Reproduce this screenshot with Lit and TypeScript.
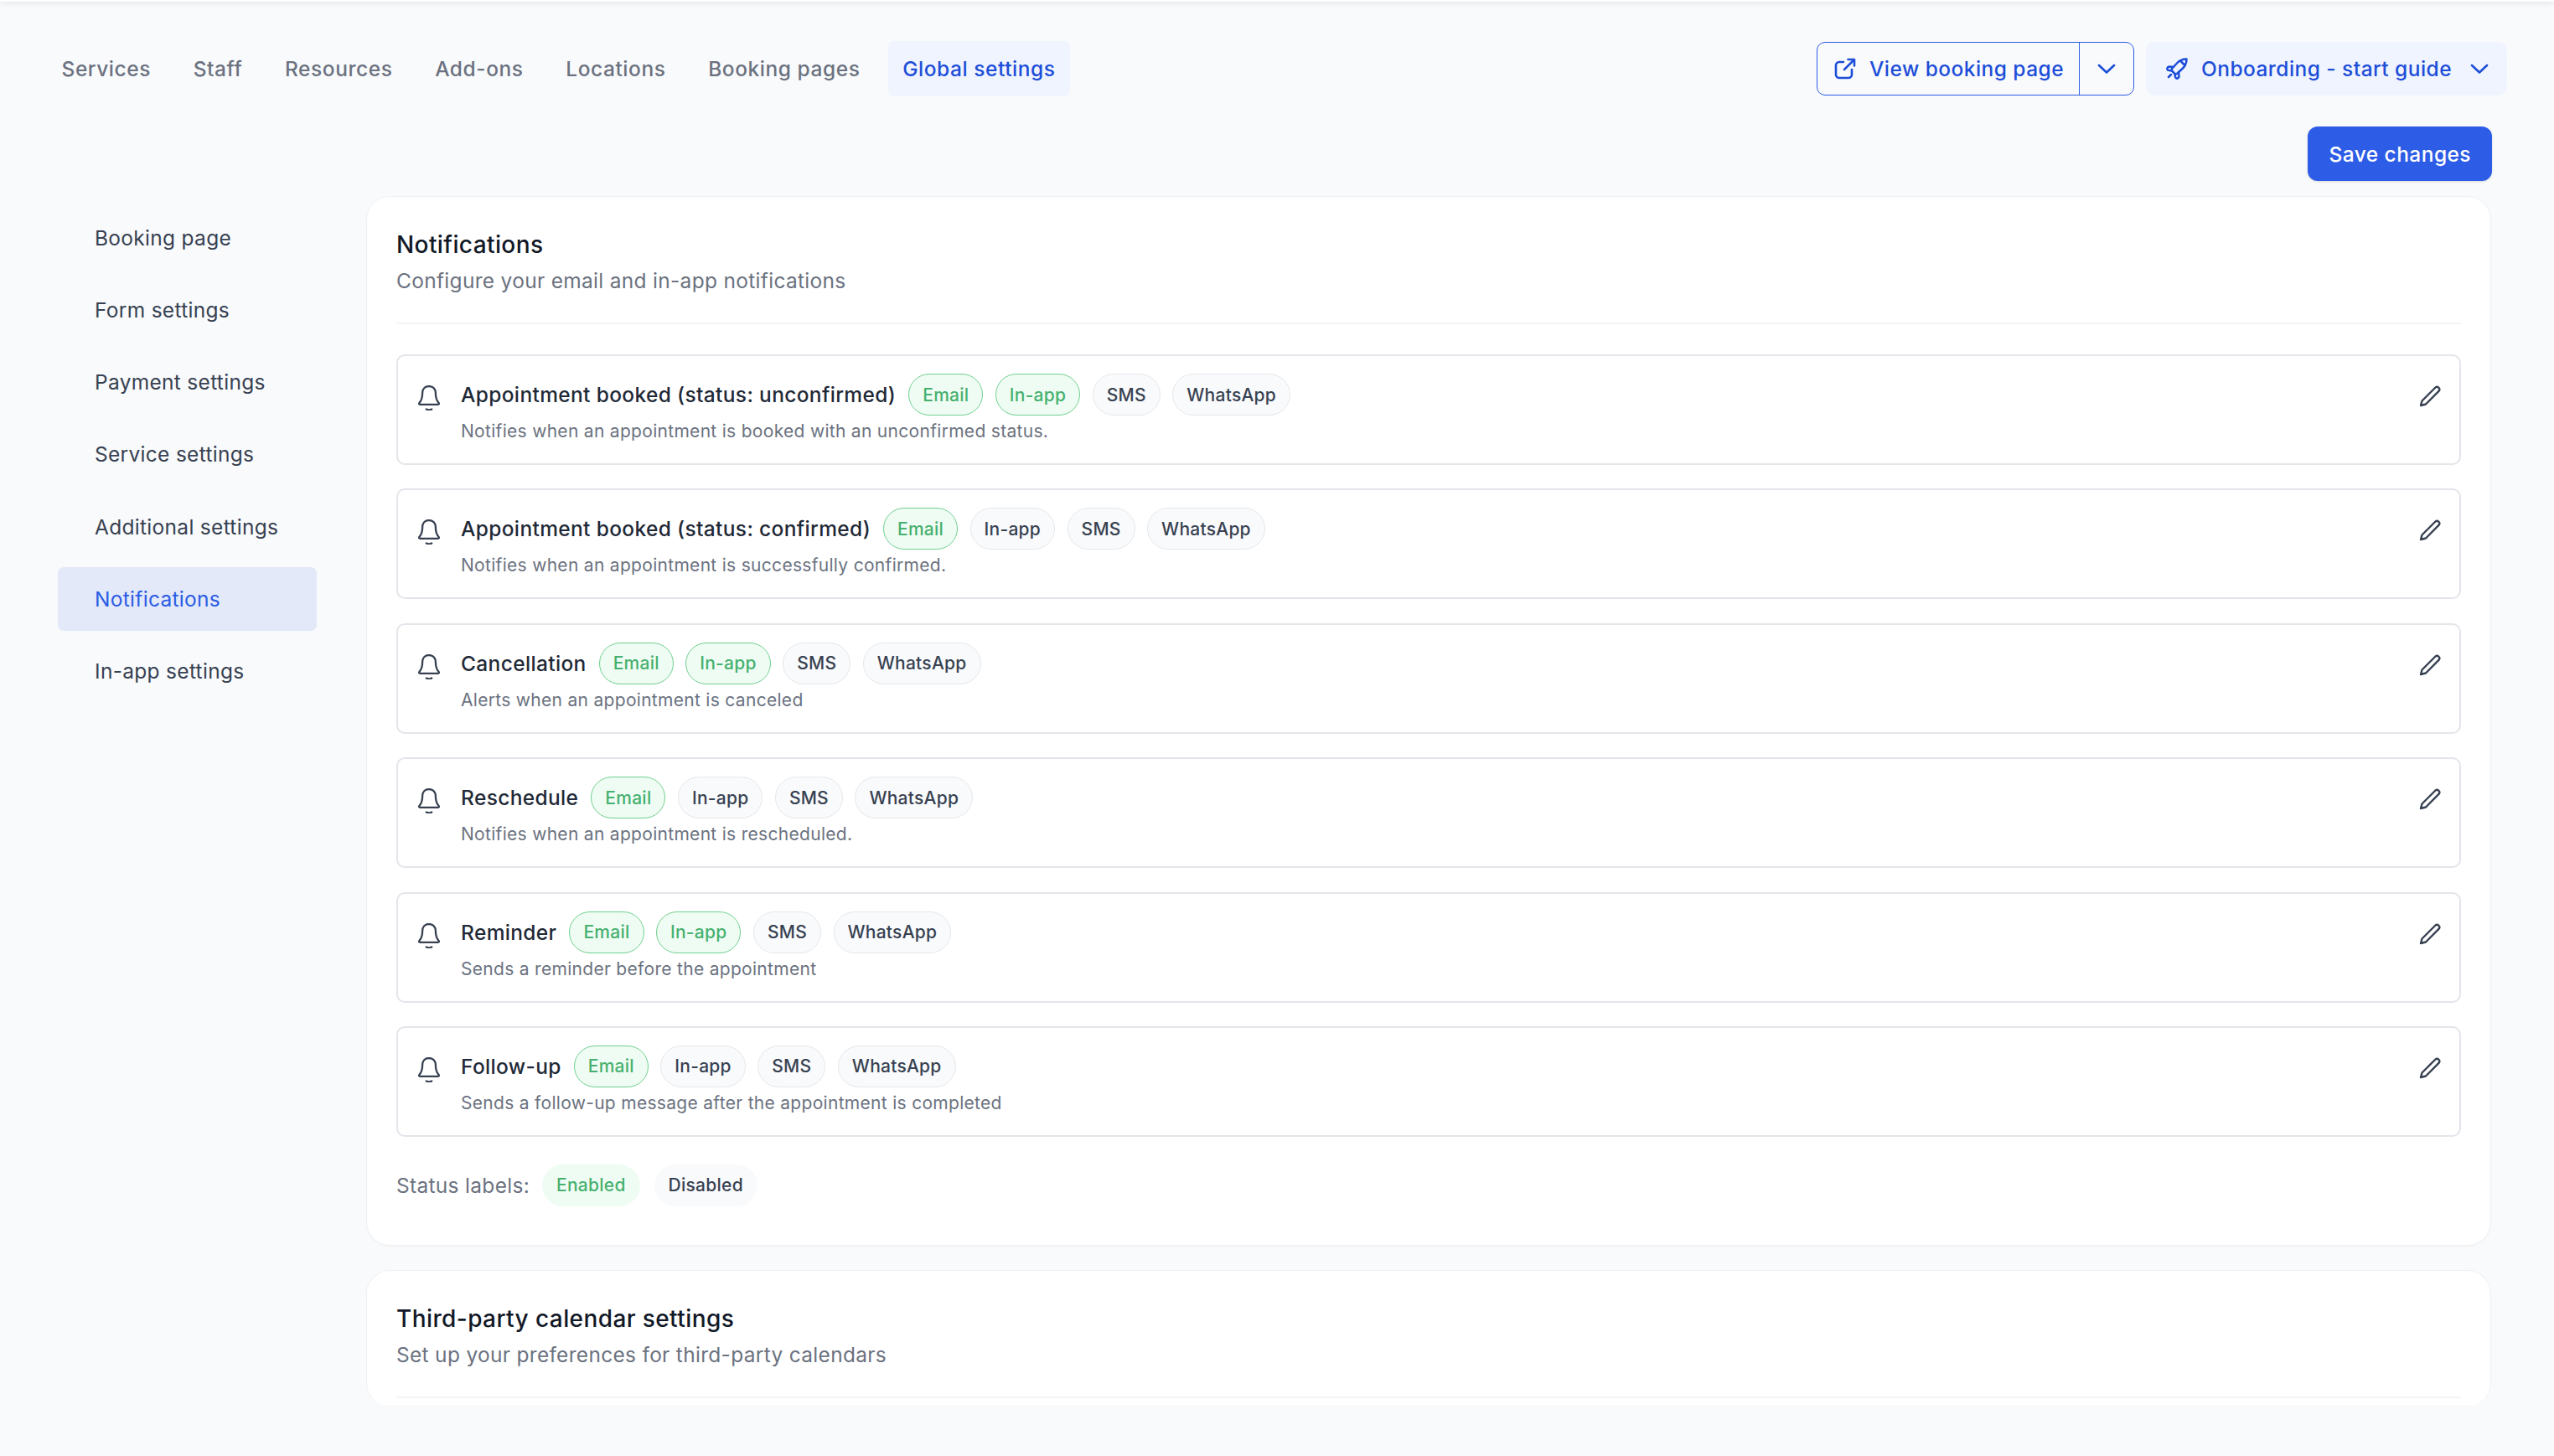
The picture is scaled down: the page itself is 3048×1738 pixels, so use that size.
import { LitElement, html, css, svg } from "lit";
import { customElement } from "lit/decorators.js";

const NAV = ["Services", "Staff", "Resources", "Add-ons", "Locations", "Booking pages", "Global settings"];
const SIDE = ["Booking page", "Form settings", "Payment settings", "Service settings", "Additional settings", "Notifications", "In-app settings"];

// each row: title, description, which channels are switched on
const ROWS = [
  { title: "Appointment booked (status: unconfirmed)", desc: "Notifies when an appointment is booked with an unconfirmed status.", on: ["Email", "In-app"] },
  { title: "Appointment booked (status: confirmed)", desc: "Notifies when an appointment is successfully confirmed.", on: ["Email"] },
  { title: "Cancellation", desc: "Alerts when an appointment is canceled", on: ["Email", "In-app"] },
  { title: "Reschedule", desc: "Notifies when an appointment is rescheduled.", on: ["Email"] },
  { title: "Reminder", desc: "Sends a reminder before the appointment", on: ["Email", "In-app"] },
  { title: "Follow-up", desc: "Sends a follow-up message after the appointment is completed", on: ["Email"] },
];
const CHANNELS = ["Email", "In-app", "SMS", "WhatsApp"];

const chevron = html`<svg class="chev" viewBox="0 0 22 12" fill="none" stroke="currentColor" stroke-width="2.6" stroke-linecap="round" stroke-linejoin="round">${svg`<path d="M2 2l9 8.5L20 2"/>`}</svg>`;
const extLink = html`<svg class="ic" viewBox="0 0 26 26" fill="none" stroke="currentColor" stroke-width="2.6" stroke-linecap="round" stroke-linejoin="round">${svg`<path d="M11 5H6a4 4 0 0 0-4 4v11a4 4 0 0 0 4 4h11a4 4 0 0 0 4-4v-6"/><path d="M16.500 2H24v7.500"/><path d="M12 14 23.500 2.500"/>`}</svg>`;
const rocket = html`<svg class="ic" viewBox="0 0 26 26" fill="none" stroke="currentColor" stroke-width="2.500" stroke-linecap="round" stroke-linejoin="round">${svg`<path d="M24.500 1.500C20 1.500 15.500 3.500 12.500 7L7 13q-1 1.500 0 2.500l3.500 3.500q1 1 2.500 0l6-5.500C22.500 10.500 24.500 6 24.500 1.500Z"/><path d="M17 3.500 22.500 9"/><path d="M9 11 4 10.500q-2 0-2.500 2-.5 1.500 1 2.300l4 .7"/><path d="M15 17l.5 5q0 2-2 2.500-1.500.5-2.300-1l-.7-4"/><path d="M6 20l-3 3"/>`}</svg>`;
const bell = html`<svg class="bell" viewBox="2 1 24 28.500" fill="none" stroke="currentColor" stroke-width="2.200" stroke-linecap="round" stroke-linejoin="round">${svg`<path d="M14 2C9 2 6.500 5.500 6.500 10c0 4.500-.5 7.500-3.500 11-.7.9-.2 1.700.8 1.700h20.400c1 0 1.500-.8.8-1.700-3-3.500-3.500-6.500-3.500-11C21.500 5.500 19 2 14 2Z"/><path d="M11 28c1.800 1 4.200 1 6 0"/>`}</svg>`;
const pencil = html`<svg class="pen" viewBox="0 0 26 26" fill="none" stroke="currentColor" stroke-width="2.400" stroke-linecap="round" stroke-linejoin="round">${svg`<path d="M19.500 2.500a3 3 0 0 1 4.200 4.200L8 22.500 2 24l1.500-5.500Z"/>`}</svg>`;

@customElement("app-root")
class AppRoot extends LitElement {
  static styles = css`
    :host {
      display: block;
      height: 1738px;
      overflow: hidden;
      background: #f9fafc;
      font-family: Inter, "Liberation Sans", sans-serif;
      font-size: 24.5px;
      letter-spacing: 0.3px;
      color: #374151;
    }
    .topline {
      height: 2px;
      background: #fff;
      box-shadow: 0 1px 6px rgba(0, 0, 0, 0.2);
    }
    header {
      display: flex;
      justify-content: space-between;
      align-items: center;
      padding: 47px 56px 0;
    }
    nav {
      display: flex;
      gap: 15.750px;
    }
    nav a {
      height: 66px;
      padding: 0 17.500px;
      display: flex;
      align-items: center;
      border-radius: 7px;
      font-weight: 500;
      letter-spacing: 0.55px;
      color: #6b7280;
    }
    nav a.active {
      background: #eff4ff;
      color: #1d4ed8;
    }
    .actions {
      display: flex;
      gap: 14px;
      color: #1d4ed8;
      font-weight: 500;
      letter-spacing: 0.45px;
    }
    .split {
      height: 64px;
      box-sizing: border-box;
      display: flex;
      border: 1.500px solid #2b5ce5;
      border-radius: 10px;
    }
    .split span {
      display: flex;
      align-items: center;
    }
    .split .main {
      gap: 16px;
      padding: 0 18px 0 20px;
      border-right: 1.500px solid #2b5ce5;
    }
    .split .more {
      padding: 0 21px;
    }
    .guide {
      height: 64px;
      display: flex;
      align-items: center;
      padding: 0 22px 0 24px;
      background: #eff4ff;
      border-radius: 10px;
    }
    .guide .ic {
      margin-right: 16px;
    }
    .guide .chev {
      margin-left: 22px;
      display: block;
    }
    .ic {
      width: 26px;
      height: 26px;
      flex: none;
    }
    .chev {
      width: 22px;
      height: 12px;
      flex: none;
    }
    .savebar {
      display: flex;
      justify-content: flex-end;
      padding: 36px 74px 18px 0;
    }
    .save {
      height: 65px;
      padding: 0 25px;
      display: flex;
      align-items: center;
      background: #2d5ce6;
      color: #fff;
      font-weight: 500;
      letter-spacing: 0.45px;
      border-radius: 12px;
      box-shadow: 0 1px 3px rgba(0, 0, 0, 0.12);
    }
    .body {
      display: flex;
      padding: 0 75px 0 69px;
      height: 1443px;
      overflow: hidden;
    }
    aside {
      width: 309px;
      flex: none;
      margin-right: 59px;
      padding-top: 11.500px;
      display: flex;
      flex-direction: column;
      gap: 10.250px;
    }
    aside a {
      height: 76px;
      padding-left: 44px;
      display: flex;
      align-items: center;
      border-radius: 7px;
      color: #374151;
    }
    aside a.active {
      background: #e3e9f9;
      color: #2b5ce5;
    }
    main {
      flex: 1;
      min-width: 0;
      display: flex;
      flex-direction: column;
      gap: 29px;
    }
    .card {
      flex: none;
      box-sizing: border-box;
      padding: 37px 35px 46px;
      background: #fff;
      border: 1px solid #eff0f3;
      border-radius: 28px;
      box-shadow: 0 1px 2px rgba(0, 0, 0, 0.03);
    }
    .card h2 {
      margin: 0;
      font-size: 28px;
      line-height: 40px;
      font-weight: 500;
      letter-spacing: 0.4px;
      color: #111827;
    }
    .card p {
      margin: 4px 0 0;
      line-height: 38px;
      color: #6b7280;
    }
    .head {
      padding-bottom: 31px;
      border-bottom: 2px solid #f3f4f6;
      margin-bottom: 36px;
    }
    .rows {
      display: flex;
      flex-direction: column;
      gap: 28.400px;
    }
    .row {
      height: 132px;
      box-sizing: border-box;
      display: flex;
      align-items: flex-start;
      padding: 21px 22px 0 24px;
      border: 2px solid #e3e5ea;
      border-radius: 10px;
    }
    .bell {
      width: 26px;
      height: 30px;
      flex: none;
      margin-top: 14px;
      color: #374151;
    }
    .pen {
      width: 26px;
      height: 26px;
      flex: none;
      margin-top: 14px;
      color: #374151;
    }
    .text {
      flex: 1;
      min-width: 0;
      margin-left: 25px;
    }
    .line {
      display: flex;
      align-items: center;
      gap: 15px;
    }
    .line b {
      font-weight: 500;
      letter-spacing: 0.35px;
      color: #1f2937;
    }
    .pills {
      display: flex;
      gap: 14.500px;
    }
    .pill {
      height: 50px;
      box-sizing: border-box;
      padding: 0 16px;
      display: flex;
      align-items: center;
      font-size: 21px;
      font-weight: 450;
      letter-spacing: 0.25px;
      border: 1px solid #e5e7eb;
      border-radius: 25px;
      background: #f9fafb;
      color: #374151;
    }
    .pill.on {
      border-color: #6fd08f;
      background: #effcf3;
      color: #46b06f;
    }
    .desc {
      margin-top: 3px;
      font-size: 21px;
      line-height: 32px;
      color: #6b7280;
    }
    .legend {
      display: flex;
      align-items: center;
      gap: 15px;
      margin-top: 32.600px;
      color: #6b7280;
    }
    .legend .pills {
      gap: 17px;
    }
    .legend .pill {
      border-color: transparent;
    }
    .clip {
      height: 163px;
      padding-bottom: 0;
      overflow: hidden;
      border-bottom: none;
      box-shadow: none;
    }
    .clip .head {
      margin-bottom: 0;
    }
  `;

  render() {
    return html`
      <div class="topline"></div>
      <header>
        <nav>
          ${NAV.map((n) => html`<a class=${n === "Global settings" ? "active" : ""}>${n}</a>`)}
        </nav>
        <div class="actions">
          <div class="split">
            <span class="main">${extLink}View booking page</span>
            <span class="more">${chevron}</span>
          </div>
          <div class="guide">${rocket}Onboarding - start guide${chevron}</div>
        </div>
      </header>
      <div class="savebar"><div class="save">Save changes</div></div>
      <div class="body">
        <aside>
          ${SIDE.map((s) => html`<a class=${s === "Notifications" ? "active" : ""}>${s}</a>`)}
        </aside>
        <main>
          <section class="card">
            <div class="head">
              <h2>Notifications</h2>
              <p>Configure your email and in-app notifications</p>
            </div>
            <div class="rows">
              ${ROWS.map(
                (r) => html`
                  <div class="row">
                    ${bell}
                    <div class="text">
                      <div class="line">
                        <b>${r.title}</b>
                        <div class="pills">
                          ${CHANNELS.map((c) => html`<span class="pill ${r.on.includes(c) ? "on" : ""}">${c}</span>`)}
                        </div>
                      </div>
                      <div class="desc">${r.desc}</div>
                    </div>
                    ${pencil}
                  </div>
                `,
              )}
            </div>
            <div class="legend">
              Status labels:
              <div class="pills">
                <span class="pill on">Enabled</span>
                <span class="pill">Disabled</span>
              </div>
            </div>
          </section>
          <section class="card clip">
            <div class="head">
              <h2>Third-party calendar settings</h2>
              <p>Set up your preferences for third-party calendars</p>
            </div>
          </section>
        </main>
      </div>
    `;
  }
}
